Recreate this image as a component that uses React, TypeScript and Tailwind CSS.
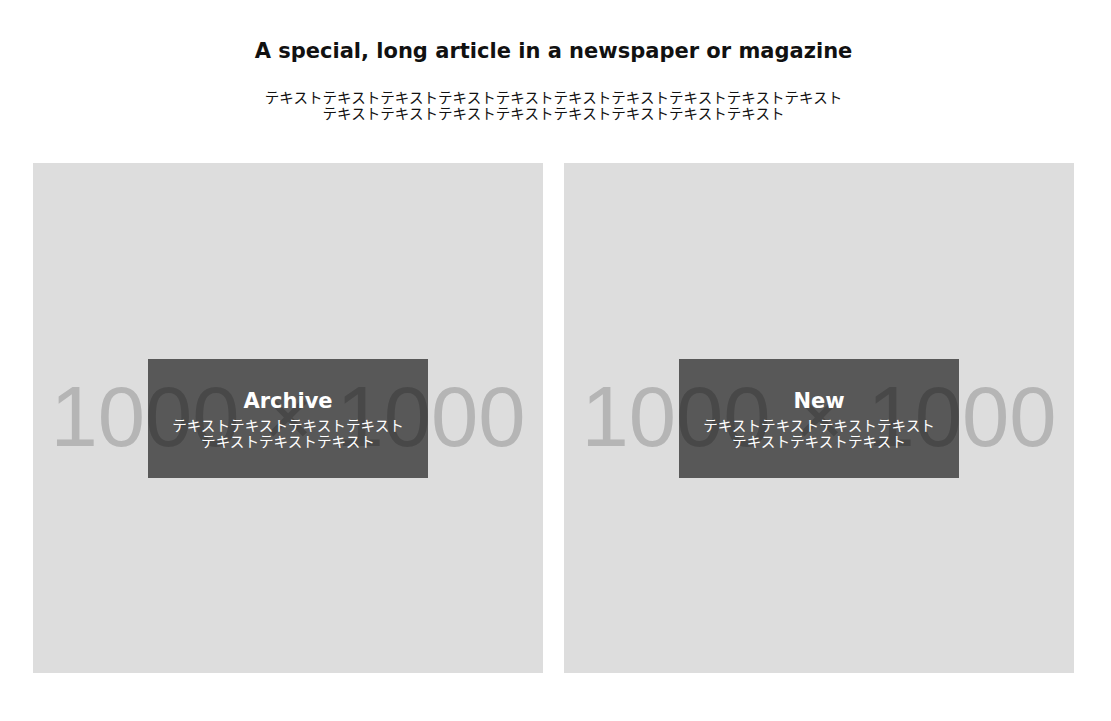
const jp = { fontFamily: '"Noto Sans CJK JP", sans-serif' };

function Card({ title }: { title: string }) {
  return (
    <div className="relative flex h-[510px] w-[510px] items-center justify-center bg-[#dddddd]">
      <div className="absolute inset-0 flex items-center justify-center pb-[4px]">
        <span className="whitespace-nowrap font-['Liberation_Sans',Arial,sans-serif] text-[85px] leading-none text-[#b5b5b5]">
          1000 × 1000
        </span>
      </div>
      <div className="relative h-[119px] w-[280px] bg-black/60 px-[18px] pt-[27px] text-center text-white">
        <h2 className="font-['DejaVu_Sans',sans-serif] text-[21px] font-bold leading-[30px]">
          {title}
        </h2>
        <p className="mt-[1px] text-[14.6px] leading-[16px]" style={jp}>
          テキストテキストテキストテキストテキストテキストテキスト
        </p>
      </div>
    </div>
  );
}

export default function App() {
  return (
    <div className="min-h-screen bg-white">
      <div className="ml-[33px] w-[1041px] pt-[36px]">
        <header className="flex flex-col items-center text-center text-[#111]">
          <h1 className="font-['DejaVu_Sans',sans-serif] text-[21px] font-bold leading-[30px]">
            A special, long article in a newspaper or magazine
          </h1>
          <p className="mt-[23px] w-[592px] text-[14.55px] leading-[16px]" style={jp}>
            テキストテキストテキストテキストテキストテキストテキストテキストテキストテキストテキストテキストテキストテキストテキストテキストテキストテキスト
          </p>
        </header>

        <div className="mt-[42px] flex gap-[21px]">
          <Card title="Archive" />
          <Card title="New" />
        </div>
      </div>
    </div>
  );
}
